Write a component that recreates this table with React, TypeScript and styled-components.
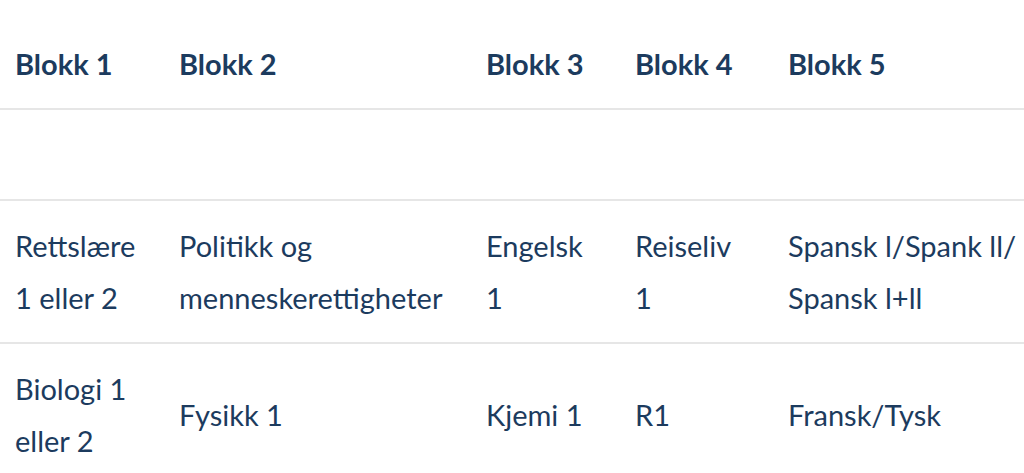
import React from "react";
import styled, { createGlobalStyle } from "styled-components";

const Global = createGlobalStyle`
  html, body { margin: 0; padding: 0; background: #ffffff; }
  body { font-family: Lato, "Noto Sans", sans-serif; color: #1c3b5e; }
`;

const Page = styled.div`
  padding-top: 20px;
`;

const Table = styled.table`
  width: 1024px;
  border-collapse: collapse;
  table-layout: fixed;
  font-size: 29px;
  line-height: 52px;
`;

const HeadCell = styled.th`
  text-align: left;
  font-weight: 700;
  padding: 18px 24px 18px 15px;
  vertical-align: middle;
  &:last-child { padding-right: 0; }
`;

const Row = styled.tr`
  border-top: 2px solid #e6e6e6;
`;

const Cell = styled.td`
  padding: 19px 24px 18px 15px;
  vertical-align: middle;
  font-weight: 400;
  &:last-child { padding-right: 0; }
`;

const NoWrap = styled.span`
  white-space: nowrap;
`;

const widths = [164, 307, 149, 153, 251];
const heads = ["Blokk 1", "Blokk 2", "Blokk 3", "Blokk 4", "Blokk 5"];

const rows: React.ReactNode[][] = [
  ["\u00a0", "", "", "", ""],
  [
    "Rettslære 1 eller 2",
    "Politikk og menneskerettigheter",
    "Engelsk 1",
    "Reiseliv 1",
    <>
      <NoWrap>Spansk l/Spank ll/</NoWrap>
      <wbr />
      <NoWrap>Spansk l+ll</NoWrap>
    </>,
  ],
  ["Biologi 1 eller 2", "Fysikk 1", "Kjemi 1", "R1", "Fransk/Tysk"],
];

export default function App() {
  return (
    <Page>
      <Global />
      <Table>
        <colgroup>
          {widths.map((w, i) => (
            <col key={i} style={{ width: w }} />
          ))}
        </colgroup>
        <thead>
          <tr>
            {heads.map((h) => (
              <HeadCell key={h}>{h}</HeadCell>
            ))}
          </tr>
        </thead>
        <tbody>
          {rows.map((r, i) => (
            <Row key={i}>
              {r.map((c, j) => (
                <Cell key={j}>{c}</Cell>
              ))}
            </Row>
          ))}
        </tbody>
      </Table>
    </Page>
  );
}
